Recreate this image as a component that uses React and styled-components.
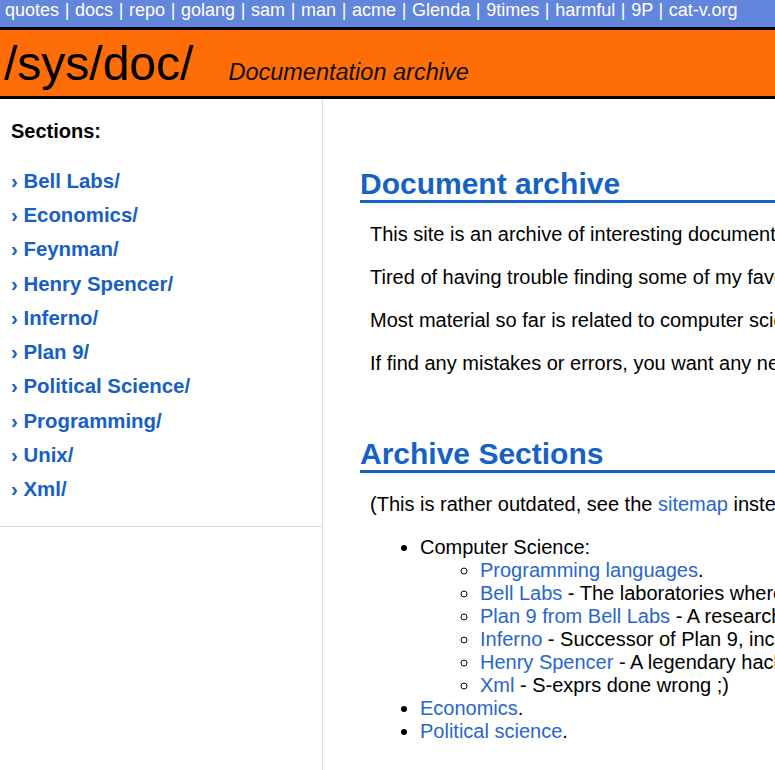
import styled, { createGlobalStyle } from 'styled-components';

const GlobalStyle = createGlobalStyle`
html, body {
    margin: 0;
    padding: 0;
    overflow: hidden;
    background: #fff;
}
body {
    font-family: "Liberation Sans", Arial, sans-serif;
    color: #000;
}
`

const Page = styled.div`
min-width: 1280px;
`

const TopNav = styled.nav`
background: #6286dc;
color: #fff;
font-size: 18px;
line-height: 20px;
word-spacing: 0.65px;
padding: 0 5px 7px;
border-bottom: 3px solid #000;
white-space: nowrap;
a{
    color: #fff;
    text-decoration: none;
}
`

const Masthead = styled.header`
background: #ff6d06;
border-bottom: 3px solid #000;
height: 66px;
display: flex;
align-items: baseline;
padding: 0 4px;
white-space: nowrap;
`

const Title = styled.h1`
margin: 0;
font-size: 48px;
font-weight: normal;
line-height: 68px;
color: #000;
`

const Tagline = styled.span`
margin-left: 35px;
font-size: 23.5px;
font-style: italic;
color: #111;
`

const Layout = styled.div`
display: grid;
grid-template-columns: 322px 1fr;
min-height: calc(100vh - 99px);
`

const Sidebar = styled.aside`
align-self: start;
border-bottom: 1px solid #ddd;
padding: 21px 0 20px 11px;
`

const SideHeading = styled.div`
font-size: 20px;
font-weight: bold;
line-height: 23px;
margin-bottom: 21px;
`

const SideList = styled.ul`
list-style: none;
margin: 0;
padding: 0;
li{
    font-size: 20.4px;
    font-weight: bold;
    line-height: 34.22px;
    color: #1760c2;
    white-space: nowrap;
}
a{
    color: #1760c2;
    text-decoration: none;
}
`

const Main = styled.main`
border-left: 1px solid #ddd;
padding: 68px 0 40px 37px;
`

const SectionTitle = styled.h2`
margin: ${props => props.first ? '0' : '61px'} 0 0;
font-size: 30px;
font-weight: bold;
line-height: 32px;
padding-top: 1px;
color: #1662c4;
border-bottom: 3px solid #1662c4;
`

const Para = styled.p`
margin: 19px 0 18px 10px;
font-size: 20px;
line-height: 25px;
white-space: nowrap;
& + &{
    margin-top: 18px;
}
`

const Link = styled.a`
color: #2766cc;
text-decoration: none;
`

const List = styled.ul`
margin: 19px 0 0 10px;
padding-left: 50px;
list-style: disc;
font-size: 20px;
line-height: 23px;
li{
    white-space: nowrap;
}
`

const SubList = styled.ul`
margin: 0;
padding-left: 60px;
list-style: circle;
`

const navItems = ['quotes', 'docs', 'repo', 'golang', 'sam', 'man', 'acme', 'Glenda', '9times', 'harmful', '9P', 'cat-v.org']

const sections = ['Bell Labs', 'Economics', 'Feynman', 'Henry Spencer', 'Inferno', 'Plan 9', 'Political Science', 'Programming', 'Unix', 'Xml']

const csItems = [
    { link: 'Bell Labs', text: ' - The laboratories where Unix, C, Plan 9 and many other great things were created.' },
    { link: 'Plan 9 from Bell Labs', text: ' - A research operating system, the successor of Unix.' },
    { link: 'Inferno', text: ' - Successor of Plan 9, including the Limbo programming language.' },
    { link: 'Henry Spencer', text: ' - A legendary hacker and author of many classic papers.' },
    { link: 'Xml', text: ' - S-exprs done wrong ;)' },
]

function App(){
    return (
        <Page>
            <GlobalStyle />
            <TopNav>
                {navItems.map((item, i) => (
                    <span key={item}>
                        {i > 0 && ' | '}
                        <a href="#">{item}</a>
                    </span>
                ))}
            </TopNav>
            <Masthead>
                <Title>/sys/doc/</Title>
                <Tagline>Documentation archive</Tagline>
            </Masthead>
            <Layout>
                <Sidebar>
                    <SideHeading>Sections:</SideHeading>
                    <SideList>
                        {sections.map(s => (
                            <li key={s}>› <a href="#">{s}/</a></li>
                        ))}
                    </SideList>
                </Sidebar>
                <Main>
                    <SectionTitle first>Document archive</SectionTitle>
                    <Para>This site is an archive of interesting documents, papers, articles and other stuff collected over the years.</Para>
                    <Para>Tired of having trouble finding some of my favorite papers online, I decided to put them all in one place.</Para>
                    <Para>Most material so far is related to computer science, but other areas of interest will be added over time.</Para>
                    <Para>If find any mistakes or errors, you want any new documents added, or have any other comments, please contact me.</Para>

                    <SectionTitle>Archive Sections</SectionTitle>
                    <Para>(This is rather outdated, see the <Link href="#">sitemap</Link> instead for a complete list of documents.)</Para>
                    <List>
                        <li>
                            Computer Science:
                            <SubList>
                                <li><Link href="#">Programming languages</Link>.</li>
                                {csItems.map(c => (
                                    <li key={c.link}><Link href="#">{c.link}</Link>{c.text}</li>
                                ))}
                            </SubList>
                        </li>
                        <li><Link href="#">Economics</Link>.</li>
                        <li><Link href="#">Political science</Link>.</li>
                    </List>
                </Main>
            </Layout>
        </Page>
    )
}

export default App
